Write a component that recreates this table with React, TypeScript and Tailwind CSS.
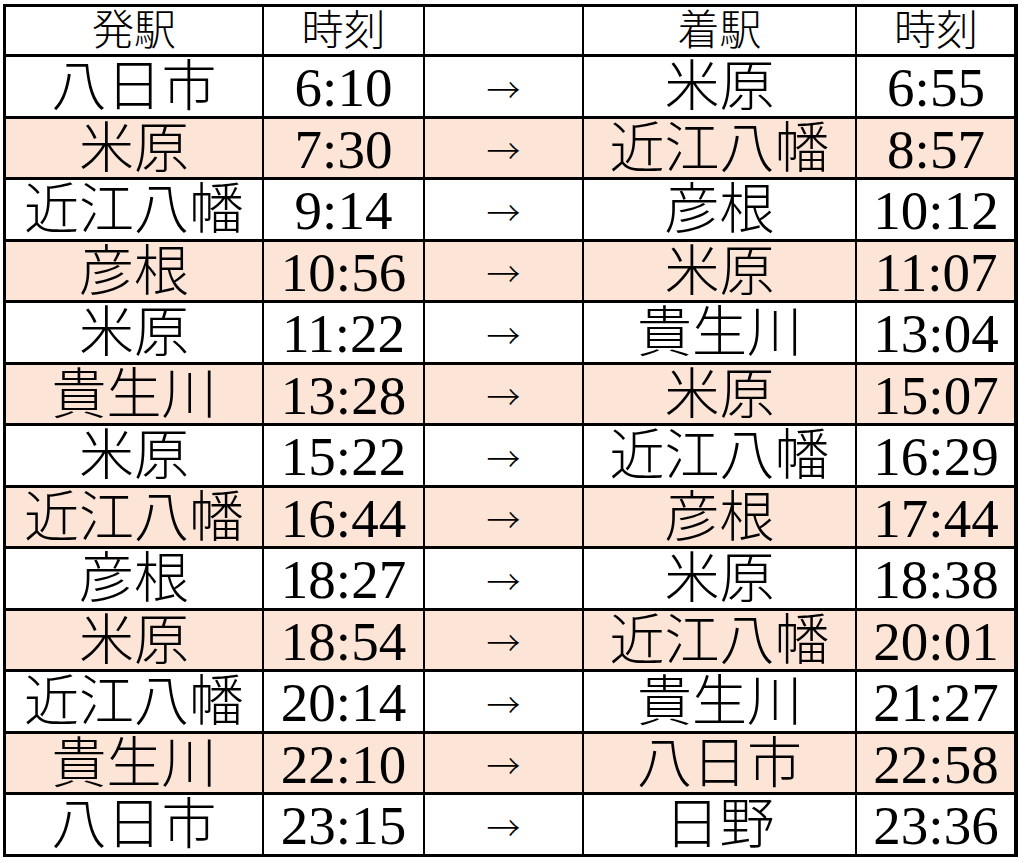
const rows: [string, string, string, string][] = [
  ["八日市", "6:10", "米原", "6:55"],
  ["米原", "7:30", "近江八幡", "8:57"],
  ["近江八幡", "9:14", "彦根", "10:12"],
  ["彦根", "10:56", "米原", "11:07"],
  ["米原", "11:22", "貴生川", "13:04"],
  ["貴生川", "13:28", "米原", "15:07"],
  ["米原", "15:22", "近江八幡", "16:29"],
  ["近江八幡", "16:44", "彦根", "17:44"],
  ["彦根", "18:27", "米原", "18:38"],
  ["米原", "18:54", "近江八幡", "20:01"],
  ["近江八幡", "20:14", "貴生川", "21:27"],
  ["貴生川", "22:10", "八日市", "22:58"],
  ["八日市", "23:15", "日野", "23:36"],
];

const font = {
  fontFamily: '"Liberation Serif", "Noto Sans CJK JP", serif',
};

const cols = "grid grid-cols-[256px_161px_159px_273px_160px]";
const cell = "flex items-center justify-center leading-none";

export default function App() {
  return (
    <div className="w-[1024px] h-[863px] bg-white pt-[4px] pl-[3px]" style={font}>
      <div className="w-[1015px] border-[3px] border-r-4 border-black text-black">
        {/* header */}
        <div className={`${cols} h-[47px] text-[42px] font-light`}>
          <div className={cell}>発駅</div>
          <div className={`${cell} border-l-2 border-black`}>時刻</div>
          <div className={`${cell} border-l-2 border-black`}></div>
          <div className={`${cell} border-l-2 border-black`}>着駅</div>
          <div className={`${cell} border-l-2 border-black`}>時刻</div>
        </div>
        {rows.map((r, i) => (
          <div
            key={i}
            className={`${cols} border-t-[3px] border-black text-[55px] ${
              i % 2 === 1 ? "bg-[#fce4d6]" : "bg-white"
            } ${i % 2 === 0 ? "h-[62px]" : "h-[61px]"}`}
          >
            <div className={`${cell} font-light`}>{r[0]}</div>
            <div className={`${cell} border-l-2 border-black pt-[2px]`}>{r[1]}</div>
            <div className={`${cell} border-l-2 border-black pt-[4px]`}>
              <span className="text-[34px] font-light font-['Noto_Sans_CJK_JP',sans-serif]">→</span>
            </div>
            <div className={`${cell} border-l-2 border-black font-light`}>{r[2]}</div>
            <div className={`${cell} border-l-2 border-black pt-[2px]`}>{r[3]}</div>
          </div>
        ))}
      </div>
    </div>
  );
}
